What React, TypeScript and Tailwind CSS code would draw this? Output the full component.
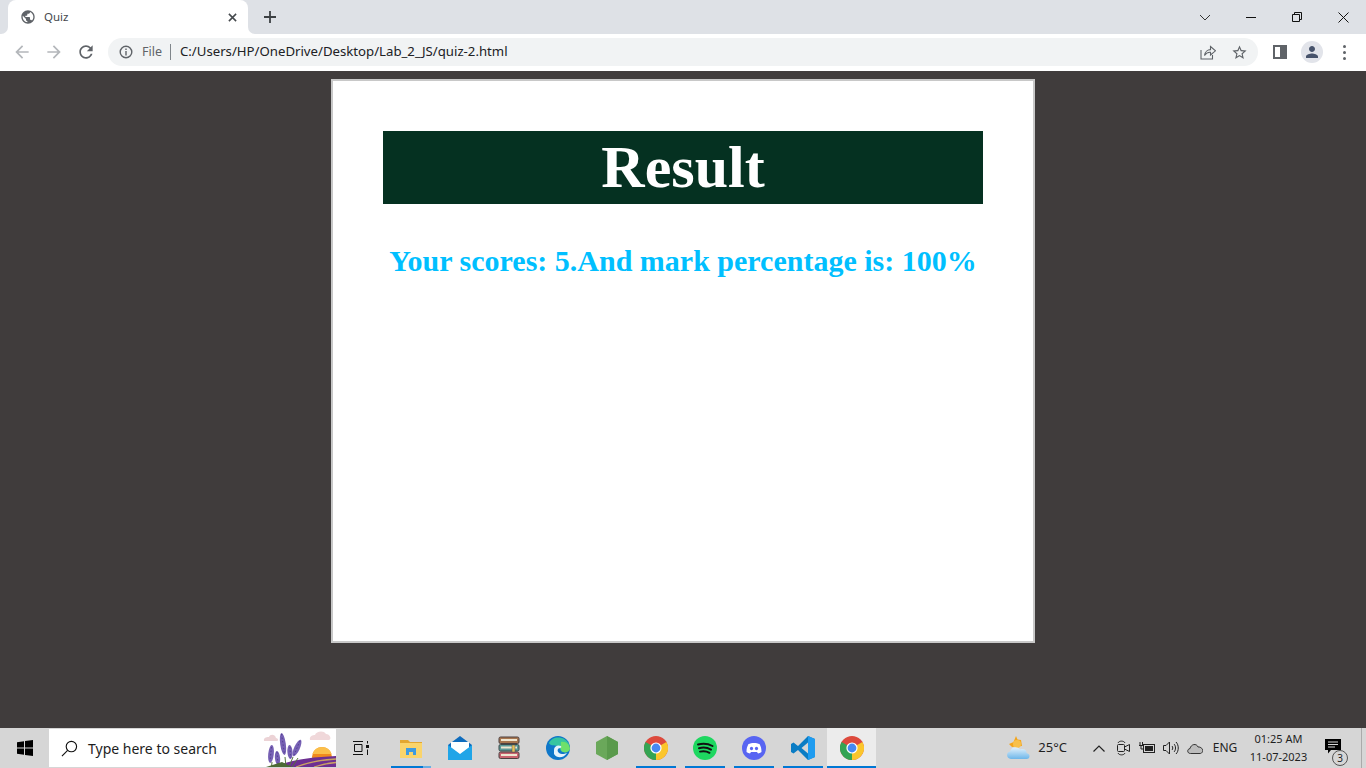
import React from "react";

const ChromeLogo = () => (
  <svg viewBox="0 0 24 24" className="h-[24px] w-[24px]">
    <circle cx="12" cy="12" r="12" fill="#dd4a3d" />
    <path d="M12 12 L22.4 6 A12 12 0 0 1 12 24 Z" fill="#fbc62c" />
    <path d="M12 12 L12 24 A12 12 0 0 1 1.6 6 Z" fill="#34a453" />
    <circle cx="12" cy="12" r="5.6" fill="#fff" />
    <circle cx="12" cy="12" r="4.4" fill="#4689f2" />
  </svg>
);

const TaskItem = ({ children, open, active, split }: { children: React.ReactNode; open?: boolean; active?: boolean; split?: boolean }) => (
  <div className={`flex h-full w-[49px] flex-col items-center ${active ? "bg-[#ececec]" : ""}`}>
    <div className="flex flex-1 items-center justify-center pt-[1px]">{children}</div>
    <div className={`flex h-[2px] justify-end ${active ? "w-full" : "w-[40px]"} ${open ? "bg-[#0078d4]" : ""}`}>
      {split && <div className="h-full w-[8px] bg-[#6aaee3]" />}
    </div>
  </div>
);

const TrayCell = ({ children }: { children: React.ReactNode }) => (
  <div className="flex h-full w-[24px] items-center justify-center">{children}</div>
);

const WinButton = ({ children }: { children: React.ReactNode }) => (
  <div className="flex h-[34px] w-[46px] items-center justify-center">{children}</div>
);

export default function App() {
  return (
    <div className="flex h-[768px] w-[1366px] flex-col overflow-hidden bg-[#403c3c] font-['Noto_Sans',sans-serif]">
      {/* Tab strip */}
      <div className="flex h-[34px] shrink-0 items-center bg-[#dee1e6]">
        <div className="relative ml-[8px] flex h-[34px] w-[240px] items-center rounded-t-[8px] bg-white pl-[12px] pr-[11px]">
          <svg viewBox="0 0 8 8" className="absolute bottom-0 left-[-7px] h-[7px] w-[7px]">
            <path d="M8 0 A8 8 0 0 1 0 8 L8 8 Z" fill="#fff" />
          </svg>
          <svg viewBox="0 0 8 8" className="absolute bottom-0 right-[-7px] h-[7px] w-[7px]">
            <path d="M0 0 A8 8 0 0 0 8 8 L0 8 Z" fill="#fff" />
          </svg>
          <svg viewBox="0 0 24 24" className="h-[16px] w-[16px]" fill="#5f6368">
            <path d="M12 2C6.48 2 2 6.48 2 12s4.48 10 10 10 10-4.48 10-10S17.52 2 12 2zm-1 17.93c-3.95-.49-7-3.85-7-7.93 0-.62.08-1.21.21-1.79L9 15v1c0 1.1.9 2 2 2v1.93zm6.9-2.54c-.26-.81-1-1.39-1.9-1.39h-1v-3c0-.55-.45-1-1-1H8v-2h2c.55 0 1-.45 1-1V7h2c1.1 0 2-.9 2-2v-.41c2.93 1.19 5 4.06 5 7.41 0 2.08-.8 3.97-2.1 5.39z" />
          </svg>
          <span className="ml-[8px] flex-1 text-[11.5px] text-[#45494d]">Quiz</span>
          <svg viewBox="0 0 10 10" className="h-[9px] w-[9px]" stroke="#45494d" strokeWidth="1.7">
            <path d="M1 1 L9 9 M9 1 L1 9" />
          </svg>
        </div>
        <svg viewBox="0 0 12 12" className="ml-[16px] h-[12px] w-[12px]" stroke="#3c4043" strokeWidth="1.8">
          <path d="M6 0 V12 M0 6 H12" />
        </svg>
        <div className="ml-auto flex">
          <WinButton>
            <svg viewBox="0 0 12 7" className="h-[7px] w-[12px]" fill="none" stroke="#333" strokeWidth="1">
              <path d="M1 1 L6 6 L11 1" />
            </svg>
          </WinButton>
          <WinButton>
            <div className="h-[1px] w-[10px] bg-[#111]" />
          </WinButton>
          <WinButton>
            <svg viewBox="0 0 10 10" className="h-[10px] w-[10px]" fill="none" stroke="#111" strokeWidth="1">
              <path d="M2.5 2.5 V0.5 H9.5 V7.5 H7.5 M0.5 2.5 H7.5 V9.5 H0.5 Z" />
            </svg>
          </WinButton>
          <WinButton>
            <svg viewBox="0 0 11 11" className="h-[11px] w-[11px]" stroke="#111" strokeWidth="1">
              <path d="M0.5 0.5 L10.5 10.5 M10.5 0.5 L0.5 10.5" />
            </svg>
          </WinButton>
        </div>
      </div>

      {/* Toolbar */}
      <div className="flex h-[37px] shrink-0 items-center bg-white pb-[1px] pl-[6px]">
        <div className="flex h-[32px] w-[32px] items-center justify-center">
          <svg viewBox="0 0 24 24" className="h-[20px] w-[20px]" fill="#b4b7bb">
            <path d="M20 11H7.83l5.59-5.59L12 4l-8 8 8 8 1.41-1.41L7.83 13H20v-2z" />
          </svg>
        </div>
        <div className="flex h-[32px] w-[32px] items-center justify-center">
          <svg viewBox="0 0 24 24" className="h-[20px] w-[20px] rotate-180" fill="#b4b7bb">
            <path d="M20 11H7.83l5.59-5.59L12 4l-8 8 8 8 1.41-1.41L7.83 13H20v-2z" />
          </svg>
        </div>
        <div className="flex h-[32px] w-[32px] items-center justify-center">
          <svg viewBox="0 0 24 24" className="h-[20px] w-[20px]" fill="#5f6368">
            <path d="M17.65 6.35C16.2 4.9 14.21 4 12 4c-4.42 0-7.99 3.58-7.99 8s3.57 8 7.99 8c3.73 0 6.84-2.55 7.73-6h-2.08c-.82 2.33-3.04 4-5.65 4-3.31 0-6-2.69-6-6s2.69-6 6-6c1.66 0 3.14.69 4.22 1.78L13 11h7V4l-2.35 2.35z" />
          </svg>
        </div>
        <div className="ml-[6px] flex h-[28px] w-[1150px] items-center rounded-full bg-[#f1f3f4] pl-[11px]">
          <svg viewBox="0 0 14 14" className="h-[14px] w-[14px]" fill="none" stroke="#5f6368" strokeWidth="1.4">
            <circle cx="7" cy="7" r="5.8" />
            <path d="M7 6 V10.5 M7 3.4 V5" />
          </svg>
          <span className="ml-[9px] text-[12.5px] text-[#5f6368]">File</span>
          <div className="ml-[8px] h-[16px] w-[1px] bg-[#80868b]" />
          <span className="ml-[9px] text-[13.2px] text-[#202124]">C:/Users/HP/OneDrive/Desktop/Lab_2_JS/quiz-2.html</span>
          <svg viewBox="0 0 16 16" className="ml-auto h-[16px] w-[16px]" fill="none" stroke="#5f6368" strokeWidth="1.1">
            <path d="M1 6 V15 H12.5 V11 M4.5 11.5 C5 7.5 8 5.6 10.5 5.6 V2.5 L15.5 6.8 L10.5 11 V8.2 C8 8 6 9 4.5 11.5 Z" />
          </svg>
          <svg viewBox="0 0 24 24" className="ml-[15px] mr-[10px] h-[17px] w-[17px]" fill="#5f6368">
            <path d="M22 9.24l-7.19-.62L12 2 9.19 8.63 2 9.24l5.46 4.73L5.82 21 12 17.27 18.18 21l-1.63-7.03L22 9.24zM12 15.4l-3.76 2.27 1-4.28-3.32-2.88 4.38-.38L12 6.1l1.71 4.04 4.38.38-3.32 2.88 1 4.28L12 15.4z" />
          </svg>
        </div>
        <div className="ml-[15px] flex h-[14px] w-[14px] justify-start border-2 border-[#5f6368] bg-white">
          <div className="ml-auto h-full w-[5px] bg-[#5f6368]" />
        </div>
        <div className="ml-[14px] flex h-[22px] w-[22px] items-center justify-center rounded-full bg-[#e2e4ea]">
          <svg viewBox="0 0 24 24" className="h-[18px] w-[18px]" fill="#47536b">
            <path d="M12 12c2.21 0 4-1.79 4-4s-1.79-4-4-4-4 1.79-4 4 1.79 4 4 4zm0 2c-2.67 0-8 1.34-8 4v2h16v-2c0-2.66-5.33-4-8-4z" />
          </svg>
        </div>
        <div className="ml-[20px] flex flex-col gap-[3px]">
          <div className="h-[3px] w-[3px] rounded-full bg-[#5f6368]" />
          <div className="h-[3px] w-[3px] rounded-full bg-[#5f6368]" />
          <div className="h-[3px] w-[3px] rounded-full bg-[#5f6368]" />
        </div>
      </div>

      {/* Page */}
      <div className="flex flex-1 justify-center pt-[8px]">
        <div className="h-[564px] w-[704px] border-2 border-[#c8c8c8] bg-white p-[50px] font-['Liberation_Serif',serif]">
          <div className="flex h-[73px] items-center justify-center bg-[#053121] pb-[2px]">
            <h1 className="text-[60px] font-bold leading-none text-white">Result</h1>
          </div>
          <p className="mt-[38px] text-center text-[30px] font-bold leading-[38px] text-[#00bfff]">
            Your scores: 5.And mark percentage is: 100%
          </p>
        </div>
      </div>

      {/* Taskbar */}
      <div className="flex h-[40px] shrink-0 items-stretch bg-[#d6d6d6]">
        <div className="flex w-[49px] items-center justify-center">
          <svg viewBox="0 0 16 16" className="h-[16px] w-[16px]" fill="#000">
            <path d="M0 2.3 L7 1.3 V7.6 H0 Z M8 1.1 L16 0 V7.6 H8 Z M0 8.4 H7 V14.7 L0 13.7 Z M8 8.4 H16 V16 L8 14.9 Z" />
          </svg>
        </div>
        <div className="my-[1px] flex w-[287px] items-center overflow-hidden bg-white pl-[12px]">
          <svg viewBox="0 0 18 18" className="h-[17px] w-[17px]" fill="none" stroke="#111" strokeWidth="1.2">
            <circle cx="11" cy="7" r="5.5" />
            <path d="M7 11 L1 17" />
          </svg>
          <span className="ml-[10px] text-[14px] text-[#1d1d1d]">Type here to search</span>
          <svg viewBox="0 0 74 38" className="ml-auto h-[38px] w-[74px]">
            <circle cx="60" cy="28" r="10" fill="#f08a1d" />
            <path d="M50.5 25 A10 10 0 0 1 69.5 25 Z" fill="#fbbf4a" />
            <path d="M12 38 C28 31 50 28 74 27 V38 Z" fill="#6d2f92" />
            <path d="M34 38 C44 34 58 31 74 30 M52 38 C58 36 66 34 74 33.5" stroke="#c9a262" strokeWidth="1.3" fill="none" />
            <path d="M2 12 C1 8 6 8 7 8 C8 5 13 5 14 9 C16 9 17 12 15 12 Z" fill="#ecd3d6" />
            <path d="M48 11 C47 7 51 6 53 6 C54 2 62 1 64 5 C68 5 70 10 67 11 Z" fill="#f0d8da" />
            <path d="M10 33 L9.5 38 M23 28 L24 38 M31 28 L27 38 M36 29 L30 38" stroke="#55723a" strokeWidth="1" fill="none" />
            <g fill="#7660b4">
              <ellipse cx="9" cy="25" rx="2.8" ry="9" transform="rotate(6 9 25)" />
              <ellipse cx="21" cy="15" rx="2.8" ry="11" transform="rotate(-8 21 15)" />
              <ellipse cx="15.5" cy="29" rx="2.6" ry="7" transform="rotate(-5 15.5 29)" />
              <ellipse cx="28" cy="23" rx="2.6" ry="7" transform="rotate(-4 28 23)" />
              <ellipse cx="35" cy="19" rx="2.8" ry="9" transform="rotate(24 35 19)" />
            </g>
            <g stroke="#4f3c8c" strokeWidth="0.9" strokeDasharray="1.5 2" fill="none">
              <path d="M9.5 18 L8 32 M19.5 5 L22.5 25 M28 18 L28.5 29 M38 12 L32 26 M15 23 L16 35" />
            </g>
            <path d="M4 38 L20 33 L30 38 Z" fill="#4c6a34" />
          </svg>
        </div>
        <div className="flex w-[50px] items-center justify-center">
          <svg viewBox="0 0 16 16" className="h-[16px] w-[16px]" fill="none" stroke="#111" strokeWidth="1">
            <path d="M0 1.5 H10 M0 14.5 H10 M1.5 4.5 H9 V11.5 H1.5 Z" />
            <rect x="13" y="5" width="3" height="3" fill="#111" stroke="none" />
            <path d="M14.5 1 V3.5 M14.5 9.5 V15" />
          </svg>
        </div>
        <TaskItem open split>
          <svg viewBox="0 0 22 20" className="h-[20px] w-[22px]">
            <path d="M0 2 H8 L10 4 H22 V8 H0 Z" fill="#e3a730" />
            <path d="M0 5 H22 V20 H0 Z" fill="#fad46b" />
            <path d="M6 10 H16 V17 H13 V14 H9 V17 H6 Z" fill="#3f9be0" />
          </svg>
        </TaskItem>
        <TaskItem>
          <svg viewBox="0 0 24 24" className="h-[24px] w-[24px]">
            <path d="M0 9 L12 0 L24 9 V24 H0 Z" fill="#0f6cbd" />
            <path d="M3 6 H21 V13 L12 19 L3 13 Z" fill="#fff" />
            <path d="M0 9 L12 18 L24 9 V24 H0 Z" fill="#20a5e8" />
          </svg>
        </TaskItem>
        <TaskItem>
          <svg viewBox="0 0 22 24" className="h-[24px] w-[22px]">
            <rect x="1" y="1" width="20" height="6.5" rx="1.5" fill="#a8764f" stroke="#4d4040" />
            <rect x="1" y="8.5" width="20" height="6.5" rx="1.5" fill="#5c9a98" stroke="#3d4a4a" />
            <rect x="1" y="16" width="20" height="6.5" rx="1.5" fill="#c9636f" stroke="#4d4040" />
            <rect x="3" y="3" width="16" height="2" fill="#efe6d0" />
            <rect x="3" y="10.5" width="16" height="2" fill="#efe6d0" />
            <rect x="3" y="18" width="16" height="2" fill="#efe6d0" />
            <rect x="14" y="9" width="3" height="7" fill="#e6c25a" stroke="#555" strokeWidth="0.5" />
          </svg>
        </TaskItem>
        <TaskItem>
          <svg viewBox="0 0 24 24" className="h-[24px] w-[24px]">
            <circle cx="12" cy="12" r="12" fill="#0f77c9" />
            <path d="M3 7 C6 0 18 -1 23 8 C24.5 13 21 17 17 16 C13 15 15 11 12 10 C8 9 4 10 3 7 Z" fill="#36c5a0" />
            <path d="M15 6 C20 5 24 9 24 13 C23 16 20 17 17 16 C14 15 15 11 15 6 Z" fill="#6fe06b" />
            <path d="M8 14 C8 10 12 8.5 15 10 C16 12 14 11.8 12.5 12.6 C10.5 14 12 18 16 18 C18 18 20 17.5 21 17 C18 22 11 23 8 18 Z" fill="#e6f3fb" />
          </svg>
        </TaskItem>
        <TaskItem>
          <svg viewBox="0 0 22 24" className="h-[24px] w-[22px]">
            <path d="M11 0 L22 6 V18 L11 24 L0 18 V6 Z" fill="#6aa85a" />
            <path d="M11 0 L22 6 V18 L11 24 Z" fill="#5a9a4c" />
          </svg>
        </TaskItem>
        <TaskItem open>
          <ChromeLogo />
        </TaskItem>
        <TaskItem open>
          <svg viewBox="0 0 24 24" className="h-[24px] w-[24px]">
            <circle cx="12" cy="12" r="12" fill="#1ed760" />
            <path d="M5 8.5 C10 7 15 7.5 19.5 10 M6 12.2 C10 11 14.5 11.5 18 13.6 M7 15.6 C10.5 14.8 13.5 15 16.5 16.8" stroke="#111" strokeWidth="2" strokeLinecap="round" fill="none" />
          </svg>
        </TaskItem>
        <TaskItem open>
          <svg viewBox="0 0 24 24" className="h-[24px] w-[24px]">
            <circle cx="12" cy="12" r="12" fill="#5865f2" />
            <path d="M6.5 8 C9.5 6.5 14.5 6.5 17.5 8 C19 10.5 19.5 13 19.5 16 C18.5 16.8 17 17.4 16 17.5 L15 16 H9 L8 17.5 C7 17.4 5.5 16.8 4.5 16 C4.5 13 5 10.5 6.5 8 Z" fill="#fff" />
            <ellipse cx="9.5" cy="12.5" rx="1.6" ry="1.8" fill="#5865f2" />
            <ellipse cx="14.5" cy="12.5" rx="1.6" ry="1.8" fill="#5865f2" />
          </svg>
        </TaskItem>
        <TaskItem open>
          <svg viewBox="0 0 24 24" className="h-[24px] w-[24px]">
            <path d="M17 0 L24 3 V21 L17 24 L7 14 L2.5 17.5 L0 16 V8 L2.5 6.5 L7 10 Z M17 6.5 L10.5 12 L17 17.5 Z" fill="#0a7cc4" fillRule="evenodd" />
            <path d="M17 0 L24 3 V21 L17 24 Z" fill="#1f9cf0" />
          </svg>
        </TaskItem>
        <TaskItem open active>
          <ChromeLogo />
        </TaskItem>

        {/* Tray */}
        <div className="ml-auto flex h-full items-center text-[#1f1f1f]">
          <svg viewBox="0 0 24 24" className="h-[24px] w-[24px]">
            <defs>
              <linearGradient id="cloud" x1="0" y1="0" x2="0" y2="1">
                <stop offset="0" stopColor="#e4f2fc" />
                <stop offset="1" stopColor="#6db6ea" />
              </linearGradient>
            </defs>
            <path d="M10 0 L11.5 3.5 L15 4 L16 10 L6 11 L3 8 L7.5 6 Z" fill="#f3a51d" />
            <circle cx="11" cy="8" r="4" fill="#f8c04a" />
            <path d="M5 23 C0.5 23 -0.5 16.5 4 15.5 C5 10.5 12 10 14 13.5 C18 12 21 14.5 20.5 17 C24.5 17.5 24.5 23 20.5 23 Z" fill="url(#cloud)" />
          </svg>
          <span className="ml-[8px] text-[13px]">25°C</span>
          <div className="ml-[20px] flex h-full">
            <TrayCell>
              <svg viewBox="0 0 12 7" className="h-[7px] w-[12px]" fill="none" stroke="#222" strokeWidth="1.2">
                <path d="M0.5 6.5 L6 1 L11.5 6.5" />
              </svg>
            </TrayCell>
            <TrayCell>
              <svg viewBox="0 0 16 16" className="h-[16px] w-[16px]" fill="none" stroke="#222" strokeWidth="1">
                <path d="M3 3 C4 0.5 9 0.5 10 3 M3 13 C4 15.5 9 15.5 10 13" />
                <rect x="2.5" y="4.5" width="7" height="7" rx="1" />
                <path d="M9.5 7 L14.5 4.5 V11.5 L9.5 9" />
              </svg>
            </TrayCell>
            <TrayCell>
              <svg viewBox="0 0 16 12" className="h-[12px] w-[16px]" fill="none" stroke="#222" strokeWidth="1">
                <rect x="4.5" y="2.5" width="11" height="8" />
                <rect x="6" y="4" width="8" height="5" fill="#222" stroke="none" />
                <path d="M1 0 V3 M3.5 0 V3 M0 3.5 H4.5 M2 4 V7 H4" />
              </svg>
            </TrayCell>
            <TrayCell>
              <svg viewBox="0 0 16 14" className="h-[14px] w-[16px]" fill="none" stroke="#222" strokeWidth="1">
                <path d="M0.5 4.5 H3 L6.5 1 V13 L3 9.5 H0.5 Z M9 5 C10 6 10 8 9 9 M11 3 C13 5 13 9 11 11 M13 1 C16 4 16 10 13 13" />
              </svg>
            </TrayCell>
            <TrayCell>
              <svg viewBox="0 0 16 11" className="h-[11px] w-[16px]" fill="#bcbcbc" stroke="#333" strokeWidth="1">
                <path d="M3.5 10.5 C0 10.5 -0.2 6 3 5.6 C4 1 9.5 0 11 4 C14 3.6 16.5 6.5 15.5 8.5 C15 10 14 10.5 13 10.5 Z" />
              </svg>
            </TrayCell>
          </div>
          <div className="flex w-[36px] justify-center text-[12px]">ENG</div>
          <div className="flex w-[74px] flex-col items-center pr-[3px] text-[11px] leading-[18px]">
            <span>01:25 AM</span>
            <span>11-07-2023</span>
          </div>
          <div className="relative flex w-[32px] items-center justify-center">
            <svg viewBox="0 0 16 15" className="mb-[3px] mr-[1px] h-[15px] w-[16px]">
              <path d="M0 0 H16 V11 H6 L3 14.5 V11 H0 Z" fill="#000" />
              <path d="M3 3 H13 M3 5.5 H13 M3 8 H10" stroke="#d6d6d6" strokeWidth="1" />
            </svg>
            <div className="absolute left-[15px] top-[11px] flex h-[16px] w-[16px] items-center justify-center rounded-full border border-[#555] bg-[#d6d6d6] text-[10px] leading-none">
              3
            </div>
          </div>
          <div className="ml-[12px] mr-[4px] h-full w-[1px] bg-[#aaa]" />
        </div>
      </div>
    </div>
  );
}
